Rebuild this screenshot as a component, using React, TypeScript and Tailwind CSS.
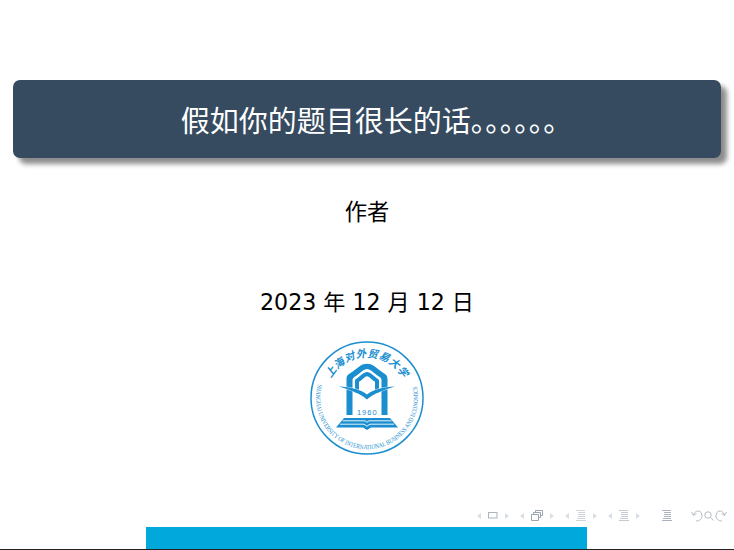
const font = "[font-family:'DejaVu_Sans','Noto_Sans_CJK_SC',sans-serif]";
const blue = "#1a8ecf";

function Logo() {
  return (
    <svg width="114" height="114" viewBox="0 0 114 114" className="block">
      <defs>
        <path id="ring-bottom" d="M 8 43 A 51 51 0 1 0 106 43" fill="none" />
        <path id="ring-top" d="M 20.7 38.2 A 41 41 0 0 1 93.3 38.2" fill="none" />
      </defs>
      <circle cx="57" cy="57" r="56" fill="#fff" stroke={blue} strokeWidth="1.5" />
      <text fontSize="10.5" fontWeight="700" fontStyle="italic" fill={blue} fontFamily="'Noto Sans CJK SC',sans-serif">
        <textPath href="#ring-top" startOffset="50%" textAnchor="middle" letterSpacing="0.4">
          上海对外贸易大学
        </textPath>
      </text>
      <text fontSize="6.5" fill={blue} fontFamily="'Liberation Serif',serif">
        <textPath href="#ring-bottom" textLength="186" lengthAdjust="spacingAndGlyphs">
          SHANGHAI UNIVERSITY OF INTERNATIONAL BUSINESS AND ECONOMICS
        </textPath>
      </text>
      {/* arch, outer and inner band */}
      <path
        d="M36.5 74V38C36.5 34 39 33 42 31L50 25C54 22 60 22 64 25L72 31C75 33 77.5 34 77.5 38V74H71.5V39C71.5 37 70 36 68 35L61 29.5C58.5 27.5 55.5 27.5 53 29.5L46 35C44 36 42.5 37 42.5 39V74Z"
        fill={blue}
      />
      <path
        d="M45 52V40C45 38.5 46 38 47.5 37L53 32.5C55.5 30.5 58.5 30.5 61 32.5L66.5 37C68 38 69 38.5 69 40V52H65V41.5C65 40.5 64 40 63 39.5L59 36C57.5 35 56.5 35 55 36L51 39.5C50 40 49 40.5 49 41.5V52Z"
        fill={blue}
      />
      {/* open book wings */}
      <path
        d="M29 45.5C40 46 50 48 57 53.5C64 48 74 46 85 45.5C74 49 64 52 57 58.5C50 52 40 49 29 45.5Z"
        fill={blue}
        stroke="#fff"
        strokeWidth="0.8"
        paintOrder="stroke"
      />
      <text x="57.3" y="73.5" textAnchor="middle" fontSize="7.5" letterSpacing="1" fill={blue} fontFamily="'Liberation Sans',sans-serif">
        1960
      </text>
      {/* book */}
      <path d="M34 77H80L88 86.5H61L57 89L53 86.5H26Z" fill={blue} />
      <path d="M32.5 79.8H55L57 81.3L59 79.8H81.5M30 83.2H54L57 85.2L60 83.2H84" stroke="#fff" strokeWidth="0.9" fill="none" />
    </svg>
  );
}

function Arrow({ dir }: { dir: "l" | "r" }) {
  return (
    <svg width="4" height="6" viewBox="0 0 4 6" className="block">
      <path d={dir === "l" ? "M4 0V6L0 3Z" : "M0 0V6L4 3Z"} fill="#dbdfe4" />
    </svg>
  );
}

function Lines({ color = "#c3cad2" }: { color?: string }) {
  return (
    <svg width="10" height="11" viewBox="0 0 10 11" className="block">
      <path d="M0 .5H9M2 2.5H9M2 4.5H9M2 6.5H9M1 8.5H9M0 10.5H10" stroke={color} strokeWidth="1" fill="none" />
    </svg>
  );
}

function NavGroup({ children }: { children: React.ReactNode }) {
  return (
    <div className="flex items-center gap-[7px]">
      <Arrow dir="l" />
      {children}
      <Arrow dir="r" />
    </div>
  );
}

function NavBar() {
  return (
    <div className="flex h-[13px] items-center justify-end pr-[7px]">
      <div className="flex items-center gap-[11px]">
        <NavGroup>
          <svg width="10" height="7" viewBox="0 0 10 7" className="block">
            <rect x=".5" y=".5" width="8.5" height="5.5" fill="none" stroke="#aab3be" />
          </svg>
        </NavGroup>
        <NavGroup>
          <svg width="12" height="11" viewBox="0 0 12 11" className="block">
            <path d="M.5 4.5H7.5V10.5H.5ZM2.5 4V2.5H9.5V7.5H8M4.5 2V.5H11.5V5.5H10" fill="none" stroke="#9aa5b1" />
          </svg>
        </NavGroup>
        <NavGroup>
          <Lines color="#d0d5db" />
        </NavGroup>
        <NavGroup>
          <Lines />
        </NavGroup>
        <div className="ml-[11px]">
          <Lines color="#aab3be" />
        </div>
        <svg width="36" height="12" viewBox="0 0 36 12" className="ml-[8px] block">
          <g fill="none" stroke="#b4bcc6" strokeWidth="1">
            <path d="M2.5 5C3.5 1.5 6 1 7 1C10 1 11 3.5 11 6C11 8.5 9 11 5 11" />
            <path d="M.5 2L2.5 5.5L5.5 3.5" />
            <circle cx="17" cy="5" r="3.2" />
            <path d="M19.5 7.5L22.5 10.5" />
            <path d="M33.5 5C32.5 1.5 30 1 29 1C26 1 25 3.5 25 6C25 8.5 27 11 31 11" />
            <path d="M35.5 2L33.5 5.5L30.5 3.5" />
          </g>
        </svg>
      </div>
    </div>
  );
}

export default function App() {
  return (
    <div className={`flex h-[550px] w-[734px] flex-col overflow-hidden bg-white text-black ${font}`}>
      <div className="flex flex-1 flex-col items-center pt-[80px]">
        <div className="flex h-[78px] w-[708px] items-center justify-center rounded-[7px] bg-[#364b60] pl-[19px] pt-[7px] text-[29px] text-white shadow-[6px_6px_5px_rgba(0,0,0,0.45)]">
          假如你的题目很长的话。。。。。。
        </div>
        <div className="mt-[39px] text-[22.3px] leading-[30px]">作者</div>
        <div className="mt-[60px] text-[22.1px] leading-[30px]">2023 年 12 月 12 日</div>
        <div className="mt-[24px]">
          <Logo />
        </div>
      </div>
      <NavBar />
      <div className="mt-[5px] h-[22px]">
        <div className="ml-[146px] h-[22px] w-[441px] bg-[#00a8dc]" />
      </div>
      <div className="h-px bg-[#222]" />
    </div>
  );
}
